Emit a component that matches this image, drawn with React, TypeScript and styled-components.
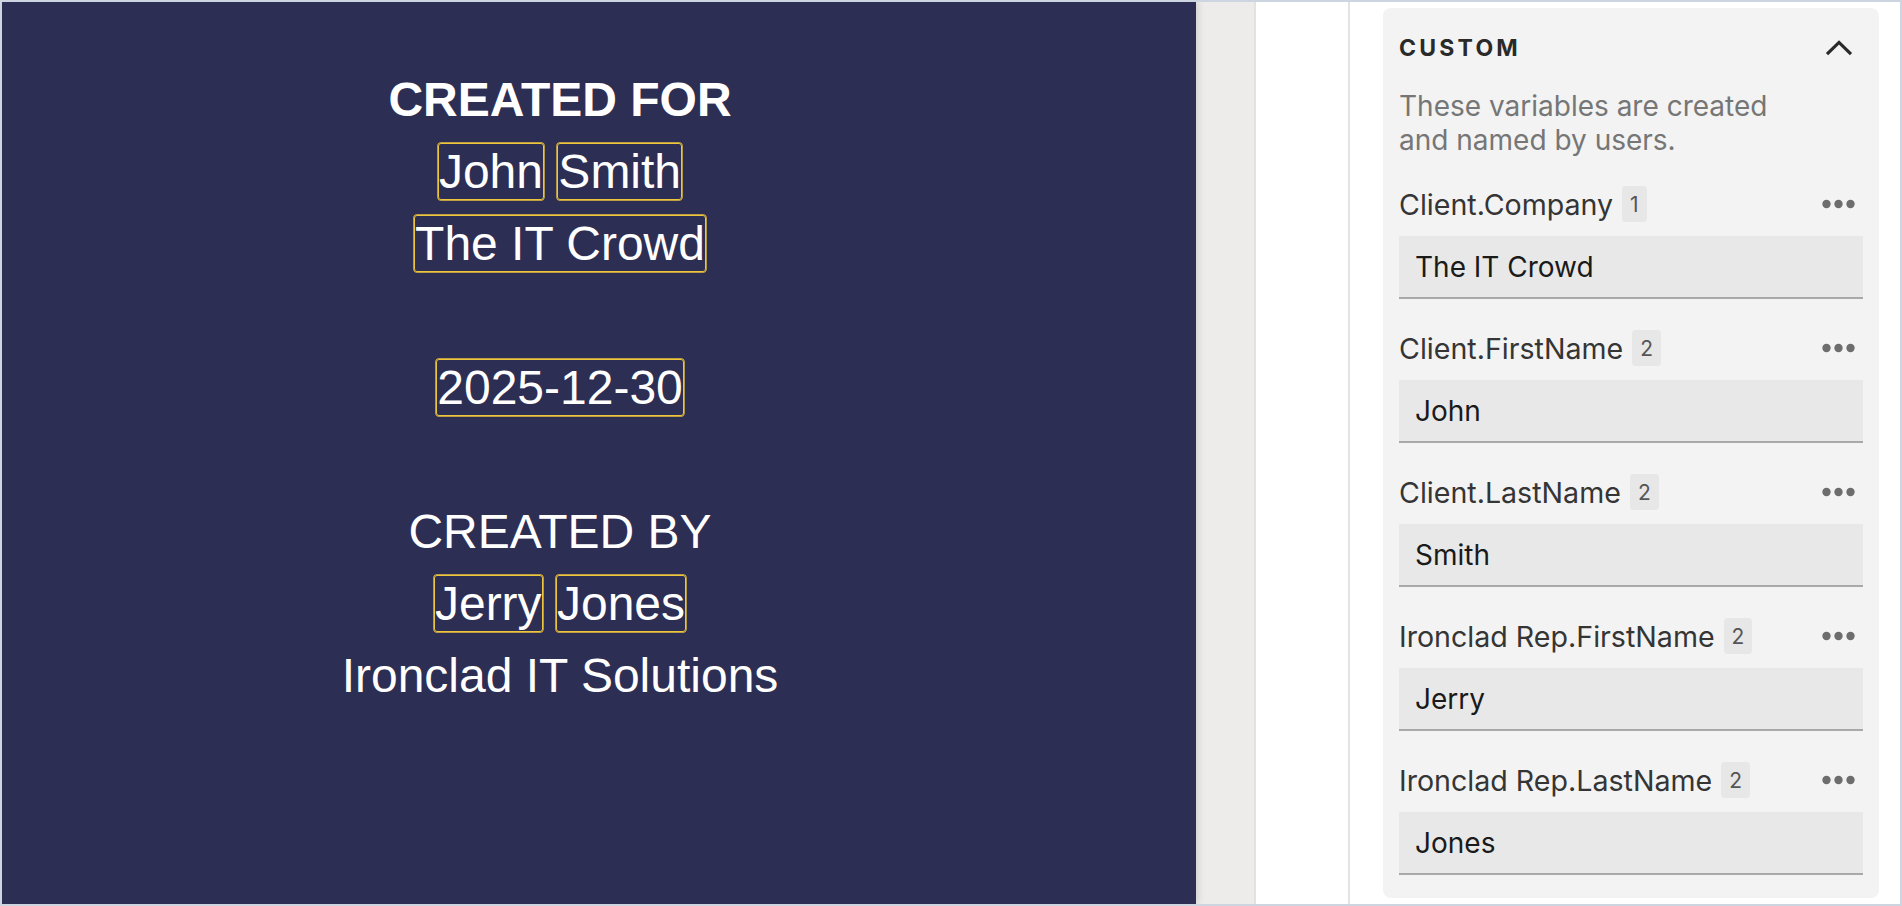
import React from 'react';
import styled, { createGlobalStyle } from 'styled-components';

const GlobalStyle = createGlobalStyle`
  html, body {
    margin: 0;
    padding: 0;
    overflow: hidden;
    background: #ffffff;
  }
  *, *::before, *::after {
    box-sizing: border-box;
  }
`;

const Frame = styled.div`
  width: 1902px;
  height: 906px;
  border: 2px solid #cdd6e0;
  display: flex;
  overflow: hidden;
  background: #ffffff;
`;

const Canvas = styled.main`
  width: 1254px;
  flex-shrink: 0;
  background: #edeceb;
  border-right: 2px solid #e2e2e2;
  display: flex;
`;

const Page = styled.article`
  width: 1194px;
  height: 100%;
  background: #2d2e54;
  box-shadow: 2px 0 7px rgba(0, 0, 0, 0.13);
  padding: 62px 78px 0 0;
  font-family: "Liberation Sans", Arial, sans-serif;
  font-size: 48px;
  line-height: 72px;
  color: #ffffff;
  text-align: center;
`;

const Line = styled.div<{ $bold?: boolean }>`
  height: 72px;
  white-space: nowrap;
  font-weight: ${(p) => (p.$bold ? 700 : 400)};
`;

const Field = styled.span`
  display: inline;
  padding: 1px 0;
  border: 1px solid #eec63c;
  border-radius: 3px;
  box-shadow: 0 0 0 0.7px #eec63c;
`;

const Rail = styled.div`
  width: 94px;
  flex-shrink: 0;
  background: #ffffff;
  border-right: 2px solid #e3e3e3;
`;

const Panel = styled.aside`
  flex: 1;
  background: #ffffff;
  padding: 6px 21px 0 33px;
  font-family: Inter, "Noto Sans", sans-serif;
`;

const Card = styled.section`
  background: #f3f3f3;
  border-radius: 8px;
  padding: 16px 16px 23px;
`;

const Header = styled.div`
  height: 48px;
  display: flex;
  align-items: center;
  justify-content: space-between;
`;

const Title = styled.h2`
  margin: 0;
  font-size: 23px;
  font-weight: 700;
  letter-spacing: 0.14em;
  color: #2a2a2a;
  text-transform: uppercase;
`;

const IconButton = styled.button<{ $inset: number }>`
  background: none;
  border: 0;
  padding: 0;
  margin: 0 ${(p) => p.$inset}px 0 auto;
  display: flex;
  align-items: center;
  cursor: pointer;
`;

const Description = styled.p`
  margin: 17px 0 29px;
  font-size: 28px;
  line-height: 34px;
  color: #767676;
`;

const VariableList = styled.div`
  display: flex;
  flex-direction: column;
  gap: 31px;
`;

const Variable = styled.div`
  display: flex;
  flex-direction: column;
  gap: 14px;
`;

const LabelRow = styled.div`
  display: flex;
  align-items: center;
  height: 36px;
`;

const Name = styled.span`
  font-size: 28.6px;
  color: #353535;
  white-space: nowrap;
`;

const Count = styled.span`
  margin-left: 9px;
  height: 36px;
  padding: 0 8px;
  background: #e7e7e7;
  border-radius: 4px;
  font-size: 21px;
  color: #555555;
  display: inline-flex;
  align-items: center;
`;

const ValueInput = styled.input`
  width: 100%;
  height: 63px;
  background: #e8e8e8;
  border: 0;
  border-bottom: 2px solid #a9a9a9;
  border-radius: 0;
  padding: 0 16px;
  font-family: Inter, "Noto Sans", sans-serif;
  font-size: 28px;
  color: #1a1a1a;
  outline: none;
`;

const ChevronUp = () => (
  <svg width="28" height="16" viewBox="0 0 28 16" fill="none">
    <polyline points="2,14.2 14,2.4 26,14.2" stroke="#2a2a2a" strokeWidth="3.2" strokeLinejoin="miter" />
  </svg>
);

const Dots = () => (
  <svg width="33" height="10" viewBox="0 0 33 10">
    <circle cx="4.5" cy="5" r="4.2" fill="#6d6d6d" />
    <circle cx="16.5" cy="5" r="4.2" fill="#6d6d6d" />
    <circle cx="28.5" cy="5" r="4.2" fill="#6d6d6d" />
  </svg>
);

const variables = [
  { name: 'Client.Company', count: 1, value: 'The IT Crowd' },
  { name: 'Client.FirstName', count: 2, value: 'John' },
  { name: 'Client.LastName', count: 2, value: 'Smith' },
  { name: 'Ironclad Rep.FirstName', count: 2, value: 'Jerry' },
  { name: 'Ironclad Rep.LastName', count: 2, value: 'Jones' },
];

export default function App() {
  return (
    <>
      <GlobalStyle />
      <Frame>
        <Canvas>
          <Page>
            <Line $bold>CREATED FOR</Line>
            <Line>
              <Field>John</Field> <Field>Smith</Field>
            </Line>
            <Line>
              <Field>The IT Crowd</Field>
            </Line>
            <Line />
            <Line>
              <Field>2025-12-30</Field>
            </Line>
            <Line />
            <Line>CREATED BY</Line>
            <Line>
              <Field>Jerry</Field> <Field>Jones</Field>
            </Line>
            <Line>Ironclad IT Solutions</Line>
          </Page>
        </Canvas>
        <Rail />
        <Panel>
          <Card>
            <Header>
              <Title>Custom</Title>
              <IconButton $inset={10} aria-label="Collapse">
                <ChevronUp />
              </IconButton>
            </Header>
            <Description>
              These variables are created
              <br />
              and named by users.
            </Description>
            <VariableList>
              {variables.map((v) => (
                <Variable key={v.name}>
                  <LabelRow>
                    <Name>{v.name}</Name>
                    <Count>{v.count}</Count>
                    <IconButton $inset={8} aria-label="More options">
                      <Dots />
                    </IconButton>
                  </LabelRow>
                  <ValueInput readOnly value={v.value} />
                </Variable>
              ))}
            </VariableList>
          </Card>
        </Panel>
      </Frame>
    </>
  );
}
